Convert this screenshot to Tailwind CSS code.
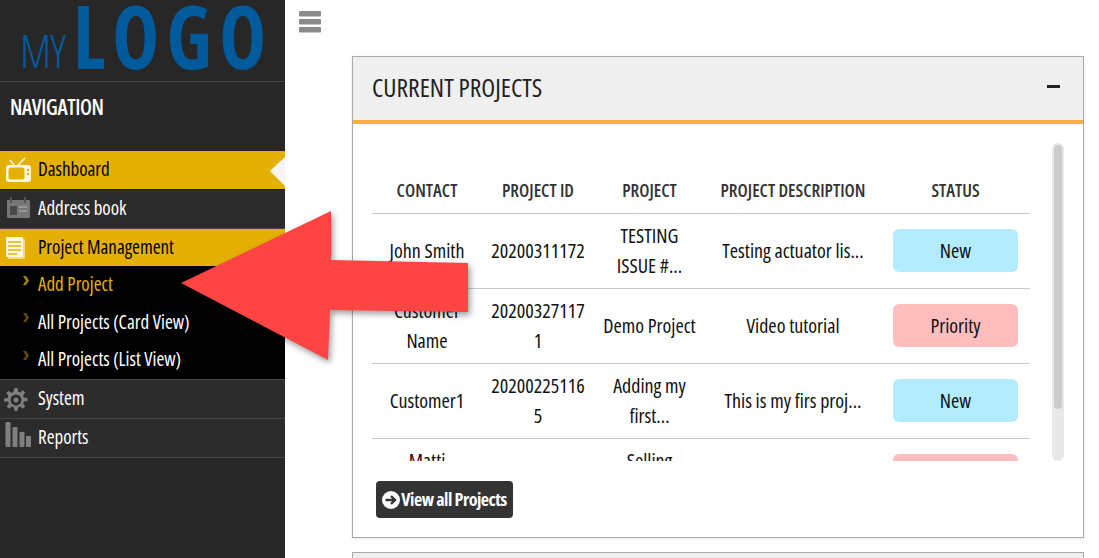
<!DOCTYPE html>
<html lang="en">
<head>
  <meta charset="UTF-8" />
  <meta name="viewport" content="width=device-width, initial-scale=1.0"/>
  <title>Current Projects</title>
  <script src="https://cdn.jsdelivr.net/npm/@tailwindcss/browser@4"></script>
</head>
<body class="h-[558px] overflow-hidden bg-white font-['Open_Sans',sans-serif] font-stretch-condensed">
  <div class="relative flex h-[558px] w-[1099px] overflow-hidden">

    <!-- sidebar -->
    <aside class="w-[285px] shrink-0 bg-[#272727] text-[19px] text-white">
      <div class="flex h-[82px] items-start overflow-hidden border-b border-[#454545] pl-[20px] text-[#015a9c]">
        <span class="mt-[27px] text-[46px] font-light leading-[46px] tracking-[-1px]">MY</span>
        <span class="ml-[8px] mt-[-25px] origin-left scale-x-[.9] whitespace-nowrap text-[88px] font-bold leading-[120px] tracking-[8px]">LOGO</span>
      </div>
      <div class="flex h-[69px] items-start pl-[10px] pt-[12px] text-[21px] font-semibold leading-[26px] tracking-[-0.4px]">NAVIGATION</div>

      <nav>
        <div class="relative flex h-[39px] items-center border-b border-[#1a1a1a] bg-[#e5b004] pb-[2px] pl-[38px] text-black">
          <svg class="absolute left-[5px] top-[5px]" width="27" height="27" viewBox="0 0 27 27" fill="none">
            <path d="M9 9 5 4M13 9l7-7" stroke="#fff8e0" stroke-width="1.6"/>
            <rect x="1" y="9" width="25" height="17" rx="3" fill="#fff8e0"/>
            <rect x="3.5" y="11.5" width="16" height="12" rx="2.5" fill="#e5b004"/>
            <rect x="22" y="13" width="2" height="2" fill="#e5b004"/>
            <rect x="22" y="17" width="2" height="2" fill="#e5b004"/>
          </svg>
          Dashboard
          <svg class="absolute right-0 top-[6px]" width="15" height="29" viewBox="0 0 15 29"><path d="M15 0v29L0 14z" fill="#f5f5f5"/></svg>
        </div>
        <div class="relative flex h-[39px] items-center border-b border-[#454545] bg-[#2c2c2c] pb-[2px] pl-[38px] font-medium">
          <svg class="absolute left-[7px] top-[7px]" width="24" height="22" viewBox="0 0 24 22">
            <rect y="3" width="23" height="18" rx="1" fill="#777777"/>
            <rect x="3" y="0" width="2" height="6" fill="#555"/>
            <rect x="17" y="0" width="2" height="6" fill="#555"/>
            <rect x="3" y="9" width="7" height="9" fill="#4a4a4a"/>
            <rect x="12" y="9" width="8" height="2" fill="#999"/>
            <rect x="12" y="13" width="8" height="2" fill="#999"/>
          </svg>
          Address book
        </div>
        <div class="relative flex h-[37px] items-center bg-[#e5b004] pl-[38px] text-black">
          <svg class="absolute left-[5px] top-[7px]" width="21" height="24" viewBox="0 0 21 24">
            <rect x="3" y="3" width="17" height="20" rx="1" fill="#f3d98a"/>
            <rect x="1" y="1" width="17" height="20" rx="1" fill="#fff8e0"/>
            <path d="M3 6h13M3 10h13M3 14h13M3 18h9" stroke="#e5b004" stroke-width="1.6"/>
          </svg>
          Project Management
        </div>

        <ul class="h-[113px] bg-black pl-[38px] font-medium">
          <li class="relative flex h-[37px] items-center text-[#e5b004]">
            <svg class="absolute left-[-16px] top-[10px]" width="8" height="9" viewBox="0 0 8 9"><path d="M1 0h3l3 4.500-3 4.500H1l3-4.500z" fill="#a8861a"/></svg>
            Add Project
          </li>
          <li class="relative flex h-[38px] items-center">
            <svg class="absolute left-[-16px] top-[10px]" width="8" height="9" viewBox="0 0 8 9"><path d="M1 0h3l3 4.500-3 4.500H1l3-4.500z" fill="#5e4a12"/></svg>
            All Projects (Card View)
          </li>
          <li class="relative flex h-[37px] items-center">
            <svg class="absolute left-[-16px] top-[10px]" width="8" height="9" viewBox="0 0 8 9"><path d="M1 0h3l3 4.500-3 4.500H1l3-4.500z" fill="#5e4a12"/></svg>
            All Projects (List View)
          </li>
        </ul>

        <div class="relative flex h-[40px] items-center border-y border-[#454545] bg-[#2c2c2c] pb-[2px] pl-[38px] font-medium">
          <svg class="absolute left-[4px] top-[8px]" width="24" height="24" viewBox="0 0 24 24" fill="#7f7f7f">
            <path fill-rule="evenodd" d="M10.500 0h3l.6 3.600 1.900.8 3-2.100 2.200 2.200-2.100 3 .8 1.900 3.600.6v3l-3.600.6-.8 1.900 2.100 3-2.200 2.200-3-2.100-1.900.8-.6 3.600h-3l-.6-3.600-1.900-.8-3 2.100-2.200-2.200 2.100-3-.8-1.900L0 13.500v-3l3.600-.6.8-1.900-2.100-3 2.200-2.200 3 2.100 1.900-.8zM12 6.500a5.500 5.500 0 1 0 0 11 5.500 5.500 0 0 0 0-11zm0 3a2.500 2.500 0 1 1 0 5 2.500 2.500 0 0 1 0-5z"/>
          </svg>
          System
        </div>
        <div class="relative flex h-[39px] items-center border-b border-[#454545] bg-[#2c2c2c] pb-[2px] pl-[38px] font-medium">
          <svg class="absolute left-[5px] top-[3px]" width="26" height="26" viewBox="0 0 26 26" fill="#7f7f7f">
            <rect x="0.500" y="0" width="5" height="25" rx="1"/>
            <rect x="7.500" y="5" width="5" height="20" rx="1"/>
            <rect x="14.500" y="10" width="5" height="15" rx="1"/>
            <rect x="21" y="14" width="5" height="11" rx="1"/>
          </svg>
          Reports
        </div>
      </nav>
    </aside>

    <!-- main -->
    <main class="flex-1 pl-[14px]">
      <svg class="mt-[11px]" width="22" height="23" viewBox="0 0 22 23" fill="#8a8a8a">
        <rect width="22" height="5.500" rx="1"/>
        <rect y="8" width="22" height="5.500" rx="1"/>
        <rect y="16" width="22" height="5.500" rx="1"/>
      </svg>

      <section class="ml-[53px] mt-[22px] h-[482px] w-[732px] border border-[#aaaaaa] shadow-[0_1px_3px_rgba(0,0,0,0.1)]">
        <header class="flex h-[67px] items-center justify-between border-b-4 border-[#f9ae42] bg-[#efefef] pb-[4px] pl-[19px] pr-[23px]">
          <h2 class="text-[25.5px] leading-[32px] text-[#222]">CURRENT PROJECTS</h2>
          <span class="h-[3px] w-[13px] bg-[#222]"></span>
        </header>

        <div class="flex pl-[19px] pt-[19px]">
          <div class="h-[318px] w-[658px] overflow-hidden">
            <table class="w-[658px] table-fixed text-center text-[20px] leading-[30px] text-[#111]">
              <thead>
                <tr class="h-[70px] border-b border-[#c8c8c8] text-[18px] text-[#333]">
                  <th class="w-[110px] pt-[24px] font-semibold">CONTACT</th>
                  <th class="w-[112px] pt-[24px] font-semibold">PROJECT ID</th>
                  <th class="w-[111px] pt-[24px] font-semibold">PROJECT</th>
                  <th class="w-[176px] pt-[24px] font-semibold">PROJECT DESCRIPTION</th>
                  <th class="w-[149px] pt-[24px] font-semibold">STATUS</th>
                </tr>
              </thead>
              <tbody>
                <tr class="h-[75px] border-b border-[#c8c8c8]">
                  <td>John Smith</td>
                  <td>20200311172</td>
                  <td>TESTING<br>ISSUE #...</td>
                  <td>Testing actuator lis...</td>
                  <td><div class="mx-auto h-[43px] w-[125px] rounded-[6px] bg-[#b4ecff] leading-[43px]">New</div></td>
                </tr>
                <tr class="h-[75px] border-b border-[#c8c8c8]">
                  <td>Customer<br>Name</td>
                  <td>20200327117<br>1</td>
                  <td>Demo Project</td>
                  <td>Video tutorial</td>
                  <td><div class="mx-auto h-[43px] w-[125px] rounded-[6px] bg-[#ffbdbd] leading-[43px]">Priority</div></td>
                </tr>
                <tr class="h-[75px] border-b border-[#c8c8c8]">
                  <td>Customer1</td>
                  <td>20200225116<br>5</td>
                  <td>Adding my<br>first...</td>
                  <td>This is my firs proj...</td>
                  <td><div class="mx-auto h-[43px] w-[125px] rounded-[6px] bg-[#b4ecff] leading-[43px]">New</div></td>
                </tr>
                <tr class="h-[75px]">
                  <td>Matti<br>&nbsp;</td>
                  <td></td>
                  <td>Selling<br>&nbsp;</td>
                  <td></td>
                  <td><div class="mx-auto h-[43px] w-[125px] rounded-[6px] bg-[#ffbdbd]"></div></td>
                </tr>
              </tbody>
            </table>
          </div>
          <div class="ml-[22px] h-[318px] w-[12px] rounded-[6px] bg-[#e8e8e8] p-[2px]">
            <div class="h-[264px] w-[8px] rounded-[4px] bg-[#cccccc]"></div>
          </div>
        </div>

        <button class="ml-[23px] mt-[20px] flex h-[37px] w-[137px] items-center justify-center gap-[1px] whitespace-nowrap rounded-[4px] bg-[#333333] text-[18px] font-bold tracking-[-0.5px] text-white">
          <svg width="18" height="18" viewBox="0 0 18 18">
            <circle cx="9" cy="9" r="9" fill="#fff"/>
            <path d="M3.500 9h9M9 5l4 4-4 4" stroke="#333" stroke-width="2.400" fill="none"/>
          </svg>
          View all Projects
        </button>
      </section>

      <section class="ml-[53px] mt-[14px] h-[40px] w-[732px] border border-[#aaaaaa] bg-[#efefef]"></section>
    </main>

    <!-- annotation arrow over the page -->
    <svg class="absolute left-0 top-0 drop-shadow-[2px_3px_3px_rgba(0,0,0,0.4)]" width="1099" height="558" viewBox="0 0 1099 558">
      <path d="M181 283 331 211 331 260 468 263 468 312 330 310 328 360z" fill="#ff4444"/>
    </svg>
  </div>
</body>
</html>
